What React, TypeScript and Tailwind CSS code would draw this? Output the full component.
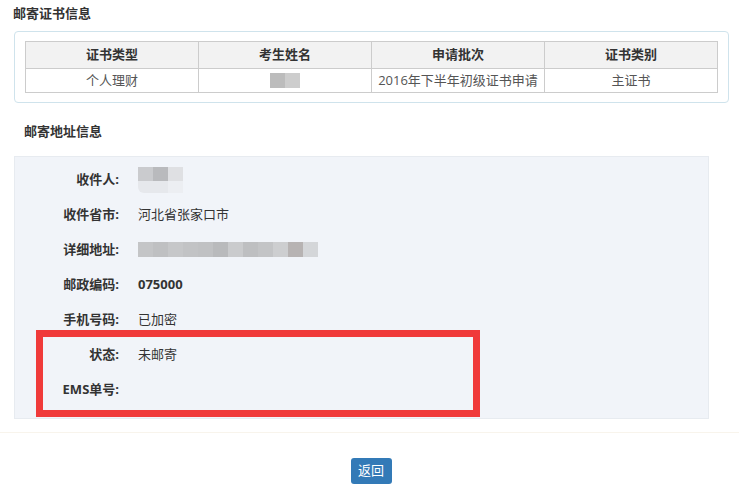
const shades = ["#c4c5c7", "#bfc0c2", "#c6c7c9", "#c2c3c5", "#c0c1c3", "#b9babc", "#cacbcd", "#bebfc1", "#c3c4c6", "#cdced0", "#b7b3b3", "#d4d6d9"];

const rows: { label: string; value?: string; bold?: boolean; kind?: "name" | "addr" }[] = [
  { label: "收件人:", kind: "name" },
  { label: "收件省市:", value: "河北省张家口市" },
  { label: "详细地址:", kind: "addr" },
  { label: "邮政编码:", value: "075000", bold: true },
  { label: "手机号码:", value: "已加密" },
  { label: "状态:", value: "未邮寄" },
  { label: "EMS单号:" },
];

function NameBlur() {
  return (
    <div className="flex flex-col">
      <div className="flex">
        <span className="h-[14px] w-[15px] bg-[#cacbce]" />
        <span className="h-[14px] w-[15px] bg-[#b9babd]" />
        <span className="h-[14px] w-[15px] bg-[#dfe0e3]" />
      </div>
      <div className="flex">
        <span className="h-[12px] w-[30px] rounded-bl-[6px] bg-[#e6e8ec]" />
        <span className="h-[12px] w-[15px] bg-[#eceef2]" />
      </div>
    </div>
  );
}

function AddrBlur() {
  return (
    <div className="flex">
      {shades.map((c, i) => (
        <span key={i} className="h-[15px] w-[15px]" style={{ background: c }} />
      ))}
    </div>
  );
}

export default function App() {
  return (
    <div className="relative h-[500px] w-[739px] bg-white font-['Open_Sans','Noto_Sans_CJK_SC',sans-serif] text-[#333]">
      <h3 className="pl-[13px] pt-[4px] text-[13px] font-bold leading-[18px]">邮寄证书信息</h3>
      <div className="mx-[14px] mt-[9px] w-[715px] rounded-[4px] border border-[#cfe3ec] px-[10px] py-[9px]">
        <table className="w-full table-fixed border-collapse text-[13px]">
          <thead>
            <tr className="h-[27px] bg-[#f2f2f2]">
              {["证书类型", "考生姓名", "申请批次", "证书类别"].map((h) => (
                <th key={h} className="border border-[#cccccc] p-0 text-center font-bold text-[#333]">
                  {h}
                </th>
              ))}
            </tr>
          </thead>
          <tbody>
            <tr className="h-[24px] text-[#555]">
              <td className="border border-[#cccccc] p-0 text-center">个人理财</td>
              <td className="border border-[#cccccc] p-0">
                <div className="flex justify-center">
                  <span className="h-[15px] w-[15px] bg-[#bcbcbc]" />
                  <span className="h-[15px] w-[15px] bg-[#cdcdcd]" />
                </div>
              </td>
              <td className="border border-[#cccccc] p-0 text-center">2016年下半年初级证书申请</td>
              <td className="border border-[#cccccc] p-0 text-center">主证书</td>
            </tr>
          </tbody>
        </table>
      </div>

      <h3 className="mt-[19px] pl-[24px] text-[13px] font-bold leading-[18px]">邮寄地址信息</h3>
      <div className="ml-[14px] mt-[16px] w-[695px] border border-[#e7ebf0] bg-[#f1f4f9] pb-[11px] pt-[5px]">
        {rows.map((r) => (
          <div key={r.label} className="flex h-[35px] items-center text-[13px]">
            <div className="w-[104px] text-right font-bold">{r.label}</div>
            <div className={`ml-[19px] ${r.bold ? "font-bold" : ""}`}>
              {r.kind === "name" ? <NameBlur /> : r.kind === "addr" ? <AddrBlur /> : r.value}
            </div>
          </div>
        ))}
      </div>

      <div className="mt-[13px] border-t border-[#f8f4ec] pt-[25px]">
        <div className="flex justify-center pl-[3px]">
          <button className="h-[26px] w-[41px] rounded-[3px] bg-[#337ab7] text-[13px] text-white">返回</button>
        </div>
      </div>

      <div className="absolute left-[36px] top-[330px] h-[87px] w-[444px] border-[7px] border-[#f03a3a]" />
    </div>
  );
}
